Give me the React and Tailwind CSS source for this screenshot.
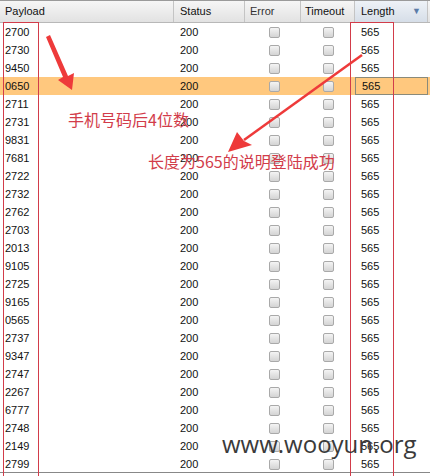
import React from "react";

const rows = ["2700","2730","9450","0650","2711","2731","9831","7681","2722","2732","2762","2703","2013","9105","2725","9165","0565","2737","9347","2747","2267","6777","2748","2149","2799"];

function Box() {
  return (
    <div className="w-[11px] h-[11px] rounded-[2px] border border-[#a9a9a9] bg-gradient-to-b from-[#f4f4f4] to-[#d4d4d4]" />
  );
}

export default function App() {
  return (
    <div className="relative w-[430px] h-[476px] bg-white overflow-hidden text-[11px] text-[#111]" style={{ fontFamily: '"Liberation Sans", Arial, sans-serif' }}>
      <div className="h-[1px] bg-[#9a9a9a]" />
      <div className="flex h-[22px] border-b border-[#b8b8b8] bg-gradient-to-b from-[#f6f6f6] to-[#e2e2e2]">
        <div className="w-[174px] pl-[5px] flex items-center border-r border-[#c4c4c4]">Payload</div>
        <div className="w-[71px] pl-[6px] flex items-center border-r border-[#c4c4c4]">Status</div>
        <div className="w-[56px] pl-[5px] flex items-center border-r border-[#c4c4c4] text-[#333]">Error</div>
        <div className="w-[54px] pl-[4px] flex items-center border-r border-[#c4c4c4]">Timeout</div>
        <div className="w-[73px] pl-[6px] pr-[6px] flex items-center justify-between border-r border-[#c4c4c4] bg-gradient-to-b from-[#eef2f7] to-[#d6dee8]">
          <span>Length</span>
          <span className="text-[#5b7ca8] text-[9px]">▼</span>
        </div>
        <div className="flex-1" />
      </div>
      <div className="flex flex-col">
        {rows.map((p, i) => {
          const sel = i === 3;
          return (
            <div key={i} className={`flex h-[18px] items-center ${sel ? "bg-[#ffc87e]" : ""}`}>
              <div className="w-[174px] pl-[5px]">{p}</div>
              <div className="w-[71px] pl-[6px]">200</div>
              <div className="w-[56px] flex justify-center pl-[2px]"><Box /></div>
              <div className="w-[54px] flex justify-center"><Box /></div>
              <div className={`w-[73px] h-[18px] flex items-center pl-[6px] ${sel ? "border border-[#8a8a7a] bg-[#ffc87e]" : ""}`}>565</div>
              <div className="flex-1" />
            </div>
          );
        })}
      </div>
      <div className="absolute left-0 right-0 top-[472px] h-[1px] bg-[#888]" />

      {/* red annotation boxes */}
      <div className="absolute left-[3px] top-[22px] w-[36px] h-[460px] border border-[#d23c4a]" />
      <div className="absolute left-[350px] top-[22px] w-[44px] h-[460px] border border-[#d23c4a]" />

      <svg className="absolute left-0 top-0" width="430" height="476">
        <polygon points="46,37 50,35 68,76 74,73 72,90 58,80 63,77" fill="#ee3a3a" />
        <line x1="362" y1="55" x2="244" y2="140" stroke="#ee3a3a" strokeWidth="2.5" />
        <polygon points="228,152 237,132 244,141 252,145" fill="#ee3a3a" />
      </svg>

      <div className="absolute left-[68px] top-[111px] text-[16px] text-[#d23c4a] leading-none" style={{ fontFamily: '"Noto Sans CJK SC", sans-serif' }}>手机号码后4位数</div>
      <div className="absolute left-[148px] top-[153px] text-[16px] text-[#d23c4a] leading-none" style={{ fontFamily: '"Noto Sans CJK SC", sans-serif' }}>长度为565的说明登陆成功</div>

      <div className="absolute left-[222px] top-[432px] text-[24px] leading-none text-[#3a3a3a]" style={{ fontFamily: '"Open Sans", "DejaVu Sans", sans-serif' }}>www.wooyun.org</div>
    </div>
  );
}
